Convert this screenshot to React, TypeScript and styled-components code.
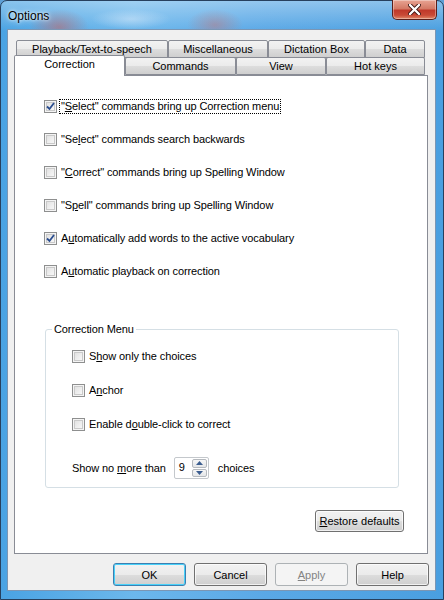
import React from 'react';
import styled, { createGlobalStyle } from 'styled-components';

const Global = createGlobalStyle`
  html, body { margin: 0; padding: 0; background: #5d9fd6; }
  body { width: 444px; height: 600px; overflow: hidden; font-family: "Liberation Sans", Arial, sans-serif; }
  #root { width: 444px; height: 600px; }
`;

const Window = styled.div`
  width: 444px;
  height: 600px;
  box-sizing: border-box;
  display: flex;
  flex-direction: column;
  border: 1px solid #27405e;
  border-radius: 7px 7px 0 0;
  padding: 0 7px 8px 6px;
  background:
    radial-gradient(ellipse 30px 18px at 58px 26px, rgba(196, 98, 98, 0.55), transparent),
    radial-gradient(ellipse 28px 16px at 214px 24px, rgba(200, 110, 110, 0.45), transparent),
    radial-gradient(ellipse 40px 10px at 130px 18px, rgba(220, 235, 250, 0.5), transparent),
    linear-gradient(180deg, rgba(255,255,255,0.35) 0px, rgba(255,255,255,0) 30px),
    linear-gradient(90deg, #4aa3e3 0%, #6cb7ec 30%, #5aa8e6 60%, #4a9fe0 100%);
`;

const TitleBar = styled.div`
  height: 28px;
  display: flex;
  justify-content: space-between;
  align-items: flex-start;
  padding-left: 1px;
`;

const Title = styled.div`
  font-family: "Liberation Sans", Arial, sans-serif;
  font-size: 12px;
  color: #000;
  margin-top: 8px;
  text-shadow: 0 0 6px rgba(255,255,255,0.9), 0 0 3px rgba(255,255,255,0.9);
`;

const CloseButton = styled.div`
  width: 45px;
  height: 20px;
  margin-top: -1px;
  margin-right: -1px;
  box-sizing: border-box;
  border: 1px solid #5a1f1b;
  border-top: none;
  border-radius: 0 0 5px 5px;
  background: linear-gradient(180deg, #e8a493 0%, #d47a66 45%, #c0392a 55%, #c94a36 80%, #e08a6a 100%);
  display: flex;
  align-items: center;
  justify-content: center;
  box-shadow: inset 0 0 0 1px rgba(255,255,255,0.35);
`;

const Client = styled.div`
  flex: 1;
  background: #f0f0f0;
  border: 1px solid #7b96b4;
  display: flex;
  flex-direction: column;
  padding: 10px 7px 0 6px;
`;

const TabStrip = styled.div`
  width: 414px;
  display: flex;
  flex-direction: column;
`;

const TabRow = styled.div<{ $front?: boolean }>`
  display: flex;
  height: ${p => (p.$front ? 19 : 17)}px;
  padding-left: ${p => (p.$front ? 0 : 2)}px;
  margin-bottom: ${p => (p.$front ? -1 : 0)}px;
  position: relative;
  z-index: ${p => (p.$front ? 2 : 1)};
`;

const Tab = styled.div<{ $w: number; $selected?: boolean }>`
  width: ${p => p.$w}px;
  box-sizing: border-box;
  height: ${p => (p.$selected ? 21 : 18)}px;
  margin-top: ${p => (p.$selected ? -2 : 0)}px;
  border: 1px solid #898c95;
  border-bottom: ${p => (p.$selected ? 'none' : '1px solid #898c95')};
  border-radius: 2px 2px 0 0;
  background: ${p => (p.$selected ? '#ffffff' : 'linear-gradient(180deg, #f2f2f2 0%, #ebebeb 50%, #dddddd 51%, #cfcfcf 100%)')};
  font-size: 11px;
  color: #000;
  display: flex;
  justify-content: center;
  align-items: ${p => (p.$selected ? 'flex-start' : 'center')};
  padding-top: ${p => (p.$selected ? 2 : 0)}px;
  position: relative;
`;

const Panel = styled.div`
  width: 414px;
  height: 479px;
  box-sizing: border-box;
  background: #fff;
  border: 1px solid #898c95;
  display: flex;
  flex-direction: column;
  padding: 14px 23px 0 29px;
  position: relative;
  z-index: 1;
`;

const OptionRow = styled.label<{ $h?: number }>`
  display: flex;
  align-items: center;
  height: ${p => p.$h ?? 33}px;
  font-size: 11px;
  letter-spacing: -0.1px;
  color: #000;
`;

const Box = styled.span`
  width: 13px;
  height: 13px;
  box-sizing: border-box;
  border: 1px solid #8e8f8f;
  background: linear-gradient(135deg, #dcdcdc 0%, #f0f0f0 60%, #fbfbfb 100%);
  box-shadow: inset 0 0 0 1px #f4f4f4, inset 0 0 0 2px #c9c9c9;
  display: flex;
  align-items: center;
  justify-content: center;
  flex-shrink: 0;
`;

const Label = styled.span<{ $focus?: boolean }>`
  margin-left: ${p => (p.$focus ? 3 : 4)}px;
  padding: 0 ${p => (p.$focus ? 1 : 0)}px;
  outline: ${p => (p.$focus ? '1px dotted #000' : 'none')};
  line-height: 13px;
  white-space: nowrap;
`;

const U = styled.span`
  text-decoration: underline;
  text-underline-offset: 1px;
`;

const Group = styled.fieldset`
  margin: 35px 0 0 1px;
  width: 354px;
  box-sizing: border-box;
  border: 1px solid #d5dfe5;
  border-radius: 3px;
  padding: 3px 0 7px 6px;
`;

const Legend = styled.legend`
  font-size: 11px;
  color: #000;
  margin-left: 0;
  padding: 0 2px;
  line-height: 13px;
  letter-spacing: -0.1px;
`;

const GroupBody = styled.div`
  display: flex;
  flex-direction: column;
  padding-left: 20px;
`;

const SpinRow = styled.div`
  display: flex;
  align-items: center;
  height: 24px;
  margin-top: 15px;
  font-size: 11px;
  letter-spacing: -0.1px;
  color: #000;
`;

const SpinBox = styled.div`
  width: 35px;
  height: 22px;
  box-sizing: border-box;
  margin: 0 9px 0 8px;
  border: 1px solid #c4c8cc;
  border-radius: 2px;
  background: #fff;
  display: flex;
  align-items: stretch;
  padding: 1px;
`;

const SpinValue = styled.div`
  flex: 1;
  padding-left: 3px;
  font-size: 11px;
  line-height: 16px;
`;

const SpinButtons = styled.div`
  width: 15px;
  display: flex;
  flex-direction: column;
  gap: 1px;
`;

const SpinBtn = styled.div`
  flex: 1;
  box-sizing: border-box;
  border: 1px solid #b5b9be;
  border-radius: 2px;
  background: linear-gradient(180deg, #f6f6f6 0%, #e4e6e8 100%);
  display: flex;
  align-items: center;
  justify-content: center;
`;

const Button = styled.div<{ $w?: number; $variant?: 'default' | 'disabled' | 'normal' }>`
  width: ${p => p.$w ?? 73}px;
  height: 23px;
  box-sizing: border-box;
  border: 1px solid ${p => (p.$variant === 'default' ? '#3c7fb1' : p.$variant === 'disabled' ? '#adb2b5' : '#707070')};
  border-radius: 3px;
  background: ${p =>
    p.$variant === 'disabled'
      ? '#f4f4f4'
      : 'linear-gradient(180deg, #f2f2f2 0%, #ebebeb 50%, #dddddd 51%, #cfcfcf 100%)'};
  box-shadow: ${p =>
    p.$variant === 'default'
      ? 'inset 0 0 0 1px #48d1f9'
      : p.$variant === 'disabled'
      ? 'none'
      : 'inset 0 0 0 1px rgba(255,255,255,0.7)'};
  color: ${p => (p.$variant === 'disabled' ? '#838383' : '#000')};
  font-size: 11px;
  display: flex;
  align-items: center;
  justify-content: center;
`;

const RestoreRow = styled.div`
  display: flex;
  justify-content: flex-end;
  margin-top: 22px;
`;

const RestoreButton = styled(Button)`
  height: 22px;
`;

const Footer = styled.div`
  display: flex;
  justify-content: flex-end;
  gap: 8px;
  margin-top: 9px;
  width: 415px;
`;

const Check = () => (
  <svg width="9" height="9" viewBox="0 0 9 9">
    <path d="M1 4.5 L3.5 7 L8 1" fill="none" stroke="#2a4d8f" strokeWidth="1.8" strokeLinejoin="miter" />
  </svg>
);

const CheckBox = ({ checked }: { checked?: boolean }) => <Box>{checked && <Check />}</Box>;

const Arrow = ({ up }: { up?: boolean }) => (
  <svg width="7" height="4" viewBox="0 0 7 4">
    <path d={up ? 'M0 4 L3.5 0 L7 4 Z' : 'M0 0 L3.5 4 L7 0 Z'} fill="#3b5d8f" />
  </svg>
);

export default function App() {
  return (
    <>
      <Global />
      <Window>
        <TitleBar>
          <Title>Options</Title>
          <CloseButton>
            <svg width="13" height="11" viewBox="0 0 13 11">
              <path d="M2 1 L11 10 M11 1 L2 10" stroke="#3a1410" strokeWidth="4" strokeLinecap="round" />
              <path d="M2 1 L11 10 M11 1 L2 10" stroke="#ffffff" strokeWidth="2.4" strokeLinecap="round" />
            </svg>
          </CloseButton>
        </TitleBar>
        <Client>
          <TabStrip>
            <TabRow>
              <Tab $w={152}>Playback/Text-to-speech</Tab>
              <Tab $w={100}>Miscellaneous</Tab>
              <Tab $w={97}>Dictation Box</Tab>
              <Tab $w={60}>Data</Tab>
            </TabRow>
            <TabRow $front>
              <Tab $w={111} $selected>Correction</Tab>
              <Tab $w={111}>Commands</Tab>
              <Tab $w={90}>View</Tab>
              <Tab $w={99}>Hot keys</Tab>
            </TabRow>
          </TabStrip>
          <Panel>
            <OptionRow>
              <CheckBox checked />
              <Label $focus>"<U>S</U>elect" commands bring up Correction menu</Label>
            </OptionRow>
            <OptionRow>
              <CheckBox />
              <Label>"Se<U>l</U>ect" commands search backwards</Label>
            </OptionRow>
            <OptionRow>
              <CheckBox />
              <Label>"<U>C</U>orrect" commands bring up Spelling Window</Label>
            </OptionRow>
            <OptionRow>
              <CheckBox />
              <Label>"S<U>p</U>ell" commands bring up Spelling Window</Label>
            </OptionRow>
            <OptionRow>
              <CheckBox checked />
              <Label>A<U>u</U>tomatically add words to the active vocabulary</Label>
            </OptionRow>
            <OptionRow>
              <CheckBox />
              <Label>A<U>u</U>tomatic playback on correction</Label>
            </OptionRow>
            <Group>
              <Legend>Correction Menu</Legend>
              <GroupBody>
                <OptionRow $h={34}>
                  <CheckBox />
                  <Label>S<U>h</U>ow only the choices</Label>
                </OptionRow>
                <OptionRow $h={34}>
                  <CheckBox />
                  <Label>A<U>n</U>chor</Label>
                </OptionRow>
                <OptionRow $h={34}>
                  <CheckBox />
                  <Label>Enable d<U>o</U>uble-click to correct</Label>
                </OptionRow>
                <SpinRow>
                  <span>Show no <U>m</U>ore than</span>
                  <SpinBox>
                    <SpinValue>9</SpinValue>
                    <SpinButtons>
                      <SpinBtn><Arrow up /></SpinBtn>
                      <SpinBtn><Arrow /></SpinBtn>
                    </SpinButtons>
                  </SpinBox>
                  <span>choices</span>
                </SpinRow>
              </GroupBody>
            </Group>
            <RestoreRow>
              <RestoreButton $w={89}><span><U>R</U>estore defaults</span></RestoreButton>
            </RestoreRow>
          </Panel>
          <Footer>
            <Button $variant="default">OK</Button>
            <Button>Cancel</Button>
            <Button $variant="disabled"><span><U>A</U>pply</span></Button>
            <Button>Help</Button>
          </Footer>
        </Client>
      </Window>
    </>
  );
}
